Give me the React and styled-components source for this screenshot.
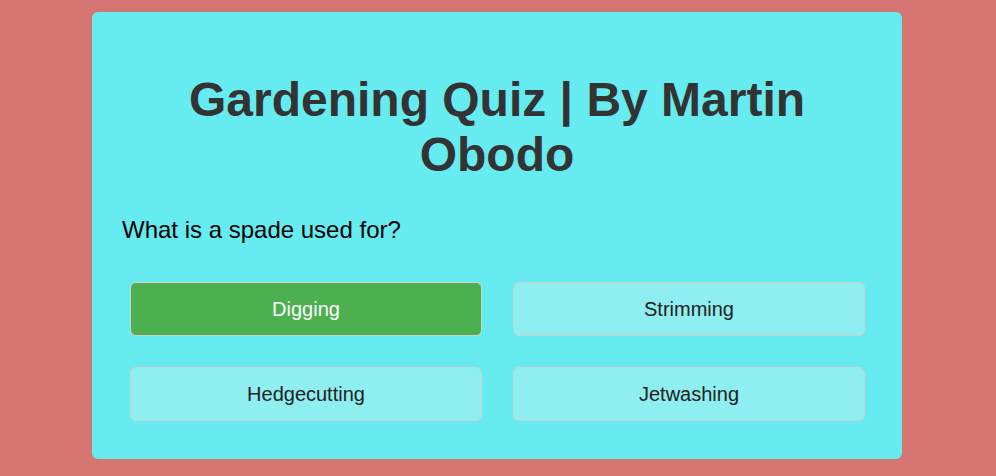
import React from "react";
import styled, { createGlobalStyle } from "styled-components";

const GlobalStyle = createGlobalStyle`
  html, body {
    margin: 0;
    padding: 0;
    background: #d67672;
    font-family: "Liberation Sans", Arial, sans-serif;
  }
  body {
    padding: 12px 2px 17px 0;
  }
`;

const Card = styled.div`
  width: 810px;
  margin: 0 auto;
  box-sizing: border-box;
  background: #66ecf0;
  border-radius: 6px;
  padding: 30px 30px 38px;
`;

const Title = styled.h1`
  margin: 30px 0 34px;
  text-align: center;
  font-size: 48px;
  font-weight: 700;
  color: #333333;
`;

const Question = styled.p`
  margin: 0 0 38px;
  font-size: 24px;
  color: #000;
`;

const Answers = styled.div`
  display: grid;
  grid-template-columns: 1fr 1fr;
  column-gap: 31px;
  row-gap: 31px;
  padding: 0 7px 0 8px;
`;

const Answer = styled.button`
  height: 54px;
  box-sizing: border-box;
  border: 1px solid #cfcfcf;
  border-radius: 6px;
  background: ${(p) => (p.$correct ? "#4caf50" : "#8eeef0")};
  color: ${(p) => (p.$correct ? "#ffffff" : "#222222")};
  font-family: "Liberation Sans", Arial, sans-serif;
  font-size: 20px;
  cursor: pointer;
`;

const answers = [
  { text: "Digging", correct: true },
  { text: "Strimming" },
  { text: "Hedgecutting" },
  { text: "Jetwashing" },
];

const App = () => (
  <>
    <GlobalStyle />
    <Card>
      <Title>Gardening Quiz | By Martin Obodo</Title>
      <Question>What is a spade used for?</Question>
      <Answers>
        {answers.map((a) => (
          <Answer key={a.text} $correct={a.correct}>
            {a.text}
          </Answer>
        ))}
      </Answers>
    </Card>
  </>
);

export default App;
